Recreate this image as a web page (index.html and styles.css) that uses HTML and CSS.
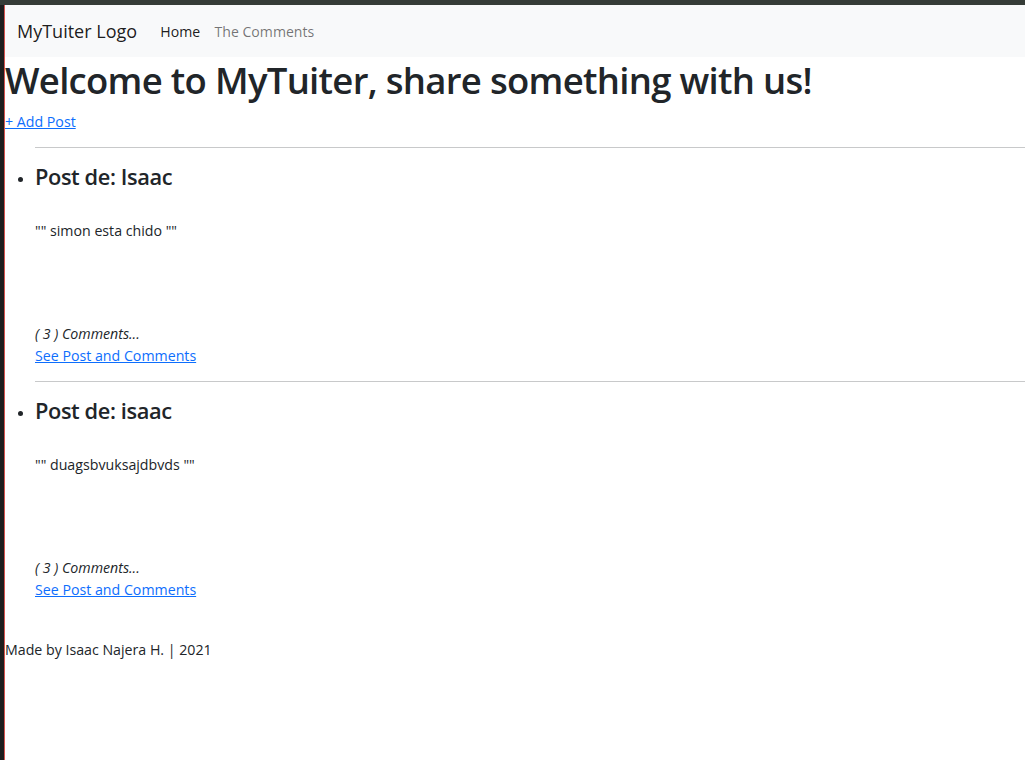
FILE: index.html
```html
<!DOCTYPE html>
<html lang="es">
<head>
<meta charset="utf-8">
<title>MyTuiter</title>
<link rel="stylesheet" href="styles.css">
</head>
<body>
<div class="topbar"></div>
<div class="frame">
  <div class="strip"></div>
  <div class="page">
    <nav class="navbar">
      <a class="brand" href="#">MyTuiter Logo</a>
      <a class="nav-link active" href="#">Home</a>
      <a class="nav-link" href="#">The Comments</a>
    </nav>
    <h1 class="title">Welcome to MyTuiter, share something with us!</h1>
    <p class="add"><a href="#">+ Add Post</a></p>
    <ul class="posts">
      <li class="post">
        <hr class="sep">
        <h3 class="post-title">Post de: Isaac</h3>
        <p class="post-body">"" simon esta chido ""</p>
        <p class="post-count">( 3 ) Comments...</p>
        <a class="post-link" href="#">See Post and Comments</a>
      </li>
      <li class="post">
        <hr class="sep">
        <h3 class="post-title">Post de: isaac</h3>
        <p class="post-body">"" duagsbvuksajdbvds ""</p>
        <p class="post-count">( 3 ) Comments...</p>
        <a class="post-link" href="#">See Post and Comments</a>
      </li>
    </ul>
    <footer class="footer">Made by Isaac Najera H. | 2021</footer>
  </div>
</div>
</body>
</html>
```
FILE: styles.css
```css
html, body {
  margin: 0;
  padding: 0;
  height: 100%;
  background: #ffffff;
}
body {
  font-family: "Open Sans", "Noto Sans", sans-serif;
  font-size: 14.2px;
  line-height: 21.3px;
  color: #212529;
  display: flex;
  flex-direction: column;
  overflow: hidden;
}
.topbar {
  height: 5px;
  background: #353c37;
  flex: none;
}
.frame {
  flex: 1;
  display: flex;
}
.strip {
  width: 4px;
  background: #1e1e1e;
  border-right: 1px solid #d4534f;
  flex: none;
}
.page {
  flex: 1;
  min-width: 0;
}
a {
  color: #0d6efd;
  text-decoration: underline;
}
.navbar {
  height: 52px;
  background: #f8f9fa;
  display: flex;
  align-items: center;
  padding-left: 12px;
}
.brand {
  font-size: 18px;
  line-height: 27px;
  color: rgba(0, 0, 0, 0.9);
  text-decoration: none;
  margin-right: 16px;
}
.nav-link {
  font-size: 14.1px;
  line-height: 21px;
  padding: 0 7.2px;
  color: rgba(0, 0, 0, 0.55);
  text-decoration: none;
}
.nav-link.active {
  color: rgba(0, 0, 0, 0.9);
}
.title {
  font-size: 36.5px;
  line-height: 43.8px;
  font-weight: 600;
  letter-spacing: -0.7px;
  margin: 2px 0 8.2px;
}
.add {
  margin: 1px 0 14.7px;
}
.posts {
  margin: 0;
  padding-left: 30px;
}
.sep {
  margin: 0 0 16px;
  border: 0;
  border-top: 1px solid #c8c9ca;
  height: 0;
}
.post + .post .sep {
  margin-top: 15.1px;
}
.post-title {
  font-size: 21.8px;
  line-height: 26.2px;
  font-weight: 600;
  letter-spacing: -0.4px;
  margin: 0;
}
.post-body {
  margin: 30.2px 0 0;
}
.post-count {
  font-style: italic;
  margin: 81.1px 0 0;
}
.post-link {
  display: inline-block;
  margin-top: 0.5px;
}
.footer {
  margin-top: 39px;
}
```
